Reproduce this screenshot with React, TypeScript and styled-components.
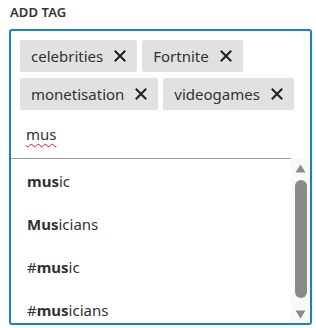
import React from "react";
import styled, { createGlobalStyle } from "styled-components";

const Global = createGlobalStyle`
  html, body { margin: 0; padding: 0; background: #ffffff; }
  body { font-family: "Noto Sans", "Open Sans", Arial, sans-serif; color: #323130; }
`;

const Page = styled.div`
  width: 316px;
  height: 328px;
  padding: 3px 4px 0 9px;
  box-sizing: border-box;
`;

const Label = styled.div`
  font-size: 13px;
  font-weight: 600;
  line-height: 18px;
  padding-left: 1px;
  letter-spacing: 0.1px;
  margin-bottom: 8px;
`;

const Box = styled.div`
  width: 303px;
  height: 296px;
  box-sizing: border-box;
  border: 2px solid #1a80cc;
  border-radius: 3px;
  display: flex;
  flex-direction: column;
  overflow: hidden;
`;

const Tags = styled.div`
  display: flex;
  flex-wrap: wrap;
  gap: 6px 5px;
  padding: 9px 8px 0 9px;
`;

const Tag = styled.div`
  height: 32px;
  display: flex;
  align-items: center;
  gap: 11px;
  padding: 0 11px 0 11px;
  background: #e1e1e1;
  border-radius: 2px;
  font-size: 15px;
  color: #323130;
`;

const Close = styled.svg`
  width: 12px;
  height: 12px;
  flex: none;
`;

const InputRow = styled.div`
  height: 48px;
  display: flex;
  align-items: center;
  padding-left: 15px;
  font-size: 15px;
`;

const Typed = styled.span`
  text-decoration: underline wavy #e81123;
  text-decoration-thickness: 1px;
  text-underline-offset: 3px;
`;

const List = styled.div`
  flex: 1;
  display: flex;
  min-height: 0;
`;

const Options = styled.div`
  flex: 1;
  border-top: 1px solid #9a9a9a;
  overflow: hidden;
`;

const Option = styled.div`
  height: 43px;
  display: flex;
  align-items: center;
  padding-left: 16px;
  font-size: 15px;
  color: #323130;
  b { font-weight: 700; }
`;

const Scrollbar = styled.div`
  width: 19px;
  background: #f9f9f9;
  display: flex;
  flex-direction: column;
  align-items: center;
  padding: 6px 0 4px;
  box-sizing: border-box;
`;

const Arrow = styled.svg`
  width: 11px;
  height: 9px;
  flex: none;
`;

const Thumb = styled.div`
  width: 12px;
  flex: 1;
  margin: 7px 0 12px;
  border-radius: 6px;
  background: #8a8a8a;
`;

const X = () => (
  <Close viewBox="0 0 12 12">
    <path d="M1.5 1.5 L10.5 10.5 M10.5 1.5 L1.5 10.5" stroke="#1f1f1f" strokeWidth="2" strokeLinecap="square" />
  </Close>
);

const tags = ["celebrities", "Fortnite", "monetisation", "videogames"];

const options: [string, string, string][] = [
  ["", "mus", "ic"],
  ["", "Mus", "icians"],
  ["#", "mus", "ic"],
  ["#", "mus", "icians"],
];

export default function App() {
  return (
    <>
      <Global />
      <Page>
        <Label>ADD TAG</Label>
        <Box>
          <Tags>
            {tags.map((t) => (
              <Tag key={t}>
                {t}
                <X />
              </Tag>
            ))}
          </Tags>
          <InputRow>
            <Typed>mus</Typed>
          </InputRow>
          <List>
            <Options>
              {options.map(([pre, bold, rest]) => (
                <Option key={pre + bold + rest}>
                  {pre}
                  <b>{bold}</b>
                  {rest}
                </Option>
              ))}
            </Options>
            <Scrollbar>
              <Arrow viewBox="0 0 11 9">
                <path d="M5.5 0.5 L10.5 8.5 L0.5 8.5 Z" fill="#8a8a8a" />
              </Arrow>
              <Thumb />
              <Arrow viewBox="0 0 11 9">
                <path d="M0.5 0.5 L10.5 0.5 L5.5 8.5 Z" fill="#8a8a8a" />
              </Arrow>
            </Scrollbar>
          </List>
        </Box>
      </Page>
    </>
  );
}
